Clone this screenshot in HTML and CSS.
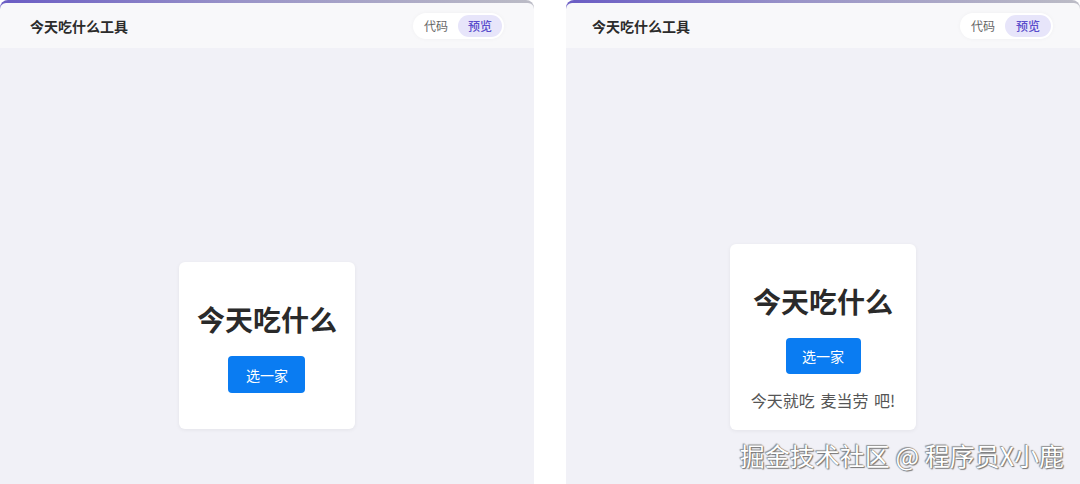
FILE: index.html
```html
<!DOCTYPE html>
<html lang="zh-CN">

<head>
    <meta charset="UTF-8">
    <meta name="viewport" content="width=device-width, initial-scale=1.0">
    <title>今天吃什么工具</title>
    <link rel="stylesheet" href="styles.css">
</head>

<body>

    <div class="shots">
        <!-- before picking -->
        <div class="panel panel-left">
            <header class="bar">
                <span class="bar-title">今天吃什么工具</span>
                <div class="tabs">
                    <span class="tab">代码</span>
                    <span class="tab active">预览</span>
                </div>
            </header>
            <div class="stage">
                <div class="card">
                    <h1>今天吃什么</h1>
                    <button class="pick">选一家</button>
                </div>
            </div>
        </div>

        <!-- after picking -->
        <div class="panel panel-right">
            <header class="bar">
                <span class="bar-title">今天吃什么工具</span>
                <div class="tabs">
                    <span class="tab">代码</span>
                    <span class="tab active">预览</span>
                </div>
            </header>
            <div class="stage">
                <div class="card">
                    <h1>今天吃什么</h1>
                    <button class="pick">选一家</button>
                    <p class="result">今天就吃 麦当劳 吧!</p>
                </div>
            </div>
        </div>
    </div>

    <div class="watermark">掘金技术社区 @ 程序员X小鹿</div>

</body>
</html>
```

FILE: styles.css
```css
body {
    margin: 0;
    height: 484px;
    overflow: hidden;
    background-color: #ffffff;
    font-family: "Noto Sans CJK SC", "Noto Sans", sans-serif;
    color: #333;
    position: relative;
}

.shots {
    display: flex;
    align-items: flex-start;
    gap: 32px;
}

.panel {
    height: 640px;
    display: flex;
    flex-direction: column;
    padding-top: 3px;
    border-radius: 8px 8px 0 0;
    background: linear-gradient(90deg, #6a5cc4 0%, #9a94c8 45%, #bcbcc6 100%);
}

.panel-left {
    width: 534px;
}

.panel-right {
    flex: 1;
    height: 622px;
}

.bar {
    height: 45px;
    display: flex;
    align-items: center;
    justify-content: space-between;
    padding: 0 30px;
    background-color: #f8f8fa;
    border-radius: 6px 6px 0 0;
}

.panel-right .bar {
    padding: 0 27px 0 26px;
}

.bar-title {
    font-size: 14px;
    font-weight: 600;
    color: #2b2b2b;
}

.tabs {
    display: flex;
    gap: 10px;
    padding: 2px 2px 2px 11px;
    background-color: #ffffff;
    border-radius: 14px;
    box-shadow: 0 0 4px rgba(0, 0, 0, 0.04);
}

.tab {
    font-size: 12px;
    line-height: 22px;
    color: #666;
}

.tab.active {
    padding: 0 10px;
    border-radius: 11px;
    background-color: #e7e5fa;
    color: #5a4ecc;
    font-weight: 500;
}

.panel-right .tab.active {
    padding: 0 11px;
}

.stage {
    flex: 1;
    display: flex;
    align-items: center;
    justify-content: center;
    background-color: #f1f1f7;
}

.card {
    display: flex;
    flex-direction: column;
    align-items: center;
    padding: 20px 18px;
    background-color: #ffffff;
    border-radius: 6px;
    box-shadow: 0 1px 4px rgba(0, 0, 0, 0.06);
}

.card h1 {
    margin: 16px 0;
    font-size: 28px;
    line-height: 42px;
    font-weight: 700;
    color: #2a2a2a;
}

.pick {
    width: 77px;
    height: 37px;
    margin-bottom: 16px;
    border: none;
    border-radius: 4px;
    background-color: #0a7cf2;
    color: #ffffff;
    font-family: inherit;
    font-size: 14px;
    cursor: pointer;
}

.panel-right .card {
    padding: 20px 21px 18px;
}

.panel-right .pick {
    width: 75px;
    height: 36px;
    margin-bottom: 14px;
}

.result {
    margin: 0;
    font-size: 16px;
    line-height: 24px;
    word-spacing: 2px;
    color: #555;
}

.watermark {
    position: absolute;
    right: 16px;
    bottom: 14px;
    font-size: 25px;
    line-height: 30px;
    color: #ffffff;
    text-shadow: 0 0 1px #555, 1px 1px 1px #777, -1px -1px 1px #999;
}
```
